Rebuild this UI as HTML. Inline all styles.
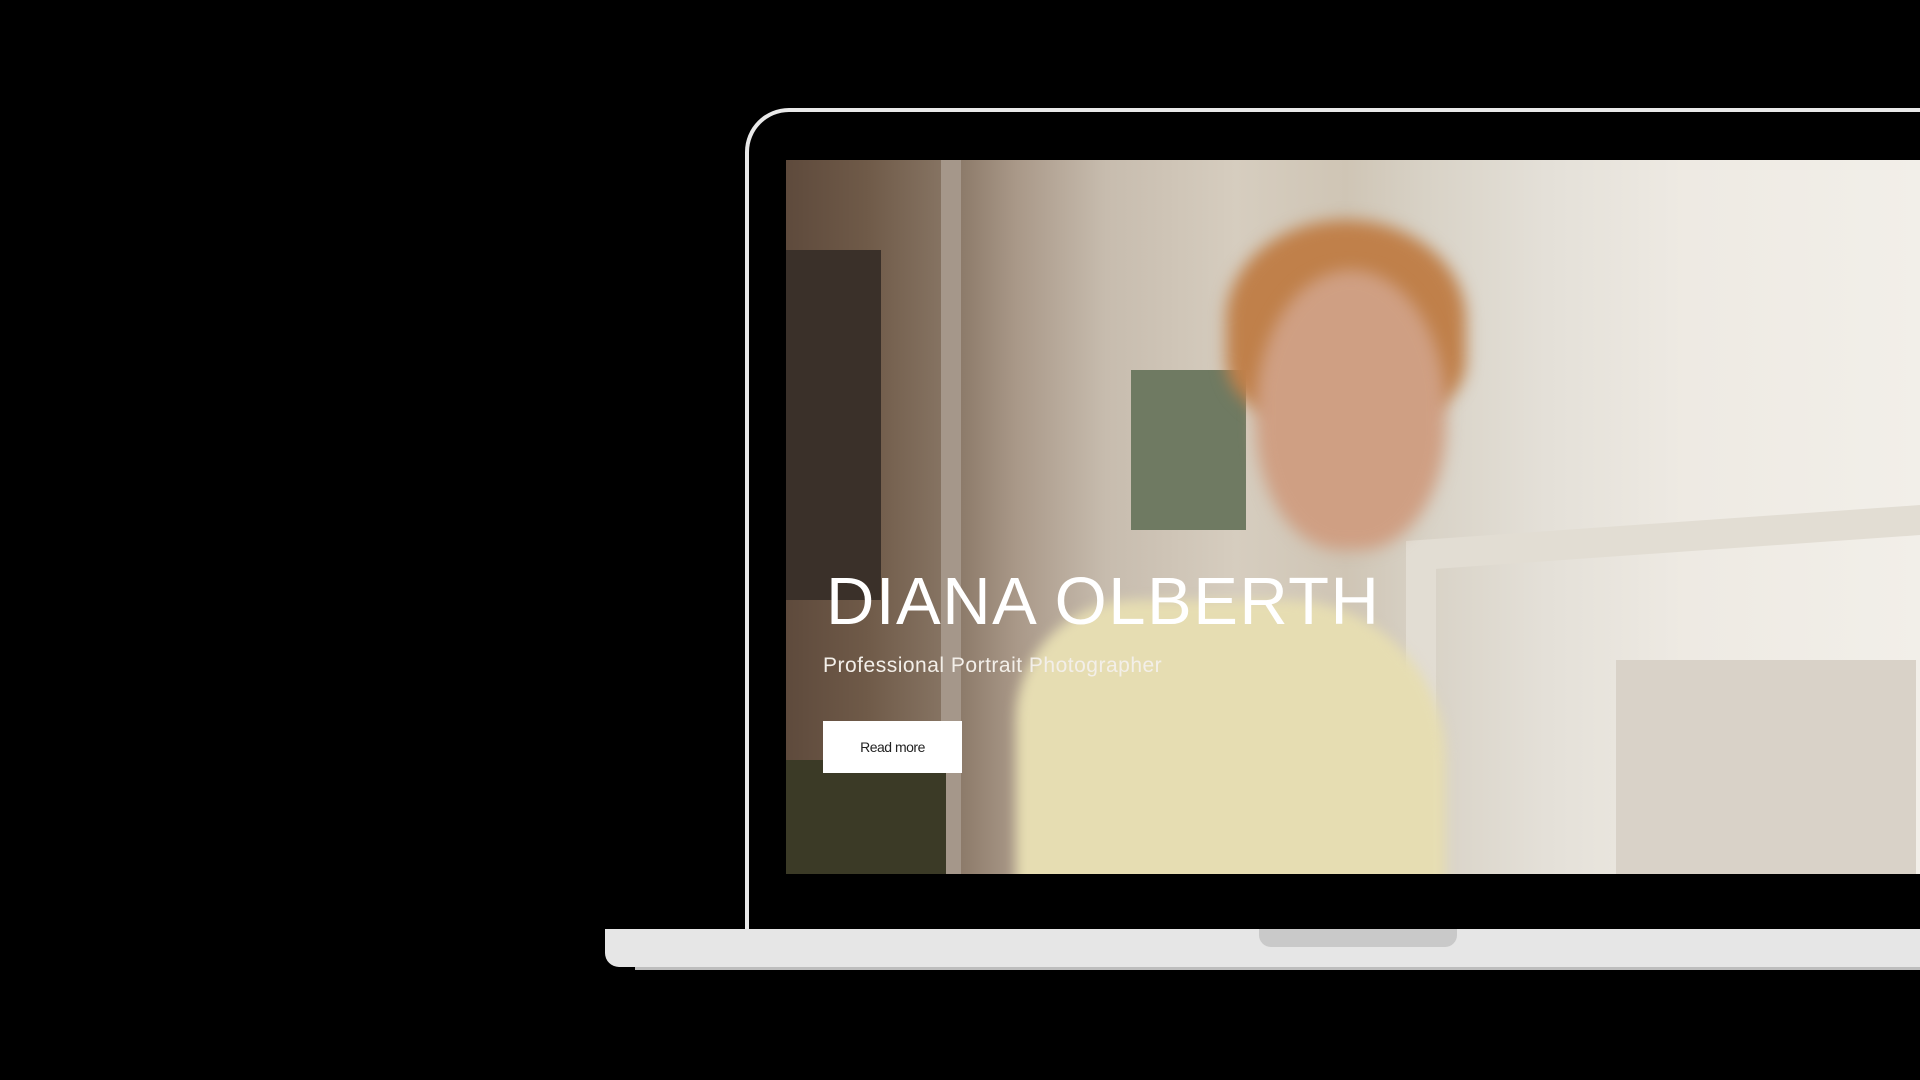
<!DOCTYPE html>
<html><head><meta charset="utf-8"><style>
html,body{margin:0;padding:0;background:#000;width:1920px;height:1080px;overflow:hidden;position:relative;font-family:"Liberation Sans",sans-serif}
.frame{position:absolute;left:745px;top:108px;width:1300px;height:830px;border:4px solid #e9e9e9;border-radius:44px 44px 0 0;border-bottom:none;box-sizing:border-box}
.screen{position:absolute;left:786px;top:160px;width:1134px;height:714px;overflow:hidden;
background:
linear-gradient(90deg,#5e4a3c 0px,#6f5a48 80px,#8a7867 170px,#a99888 230px,#c7bcae 320px,#d6cdbf 450px,#cfc5b5 560px,#d8d2c6 640px,#e4e0d8 760px,#eeeae3 900px,#f2efe9 1134px);}
.win{position:absolute;background:#2c2620}
.shirt{position:absolute;left:230px;top:440px;width:430px;height:300px;background:#e6ddb2;border-radius:120px 160px 0 0;filter:blur(6px)}
.face{position:absolute;left:470px;top:110px;width:190px;height:280px;background:#cf9f83;border-radius:50% 50% 45% 45%;filter:blur(8px)}
.hair{position:absolute;left:440px;top:60px;width:240px;height:200px;background:#c0804a;border-radius:50% 50% 30% 30%;filter:blur(8px)}
.wframe{position:absolute;left:620px;top:360px;width:600px;height:400px;border:30px solid #e2ddd3;box-sizing:border-box;transform:skewY(-4deg)}
h1{position:absolute;left:40px;top:402px;margin:0;font-weight:400;font-size:67px;letter-spacing:1.5px;color:#fff;white-space:nowrap;line-height:80px}
.sub{position:absolute;left:37px;top:494px;font-size:21px;color:#f3efe9;letter-spacing:.5px}
.btn{position:absolute;left:37px;top:561px;width:139px;height:52px;background:#fff;color:#222;font-size:14px;display:flex;align-items:center;justify-content:center;letter-spacing:-.5px}
.base{position:absolute;left:605px;top:929px;width:1400px;height:38px;background:#e6e6e6;border-radius:0 0 0 14px}
.base2{position:absolute;left:635px;top:965px;width:1400px;height:5px;background:#bdbdbd}
.notch{position:absolute;left:1259px;top:929px;width:198px;height:18px;background:#c9c9c9;border-radius:0 0 12px 12px}
</style></head><body>
<div class="frame"></div>
<div class="screen">
<div class="win" style="left:0;top:90px;width:95px;height:350px;background:#3a3029"></div>
<div class="win" style="left:155px;top:0;width:20px;height:714px;background:#a5978a"></div>
<div class="win" style="left:0;top:600px;width:160px;height:114px;background:#3b3a26"></div>
<div class="win" style="left:345px;top:210px;width:115px;height:160px;background:#6f7a62"></div>
<div class="wframe"></div>
<div class="shirt"></div>
<div class="hair"></div>
<div class="face"></div>
<div class="win" style="left:830px;top:500px;width:300px;height:214px;background:#d9d2c8"></div>
<h1>DIANA OLBERTH</h1>
<div class="sub">Professional Portrait Photographer</div>
<div class="btn">Read more</div>
</div>
<div class="base2"></div>
<div class="base"></div>
<div class="notch"></div>
</body></html>
